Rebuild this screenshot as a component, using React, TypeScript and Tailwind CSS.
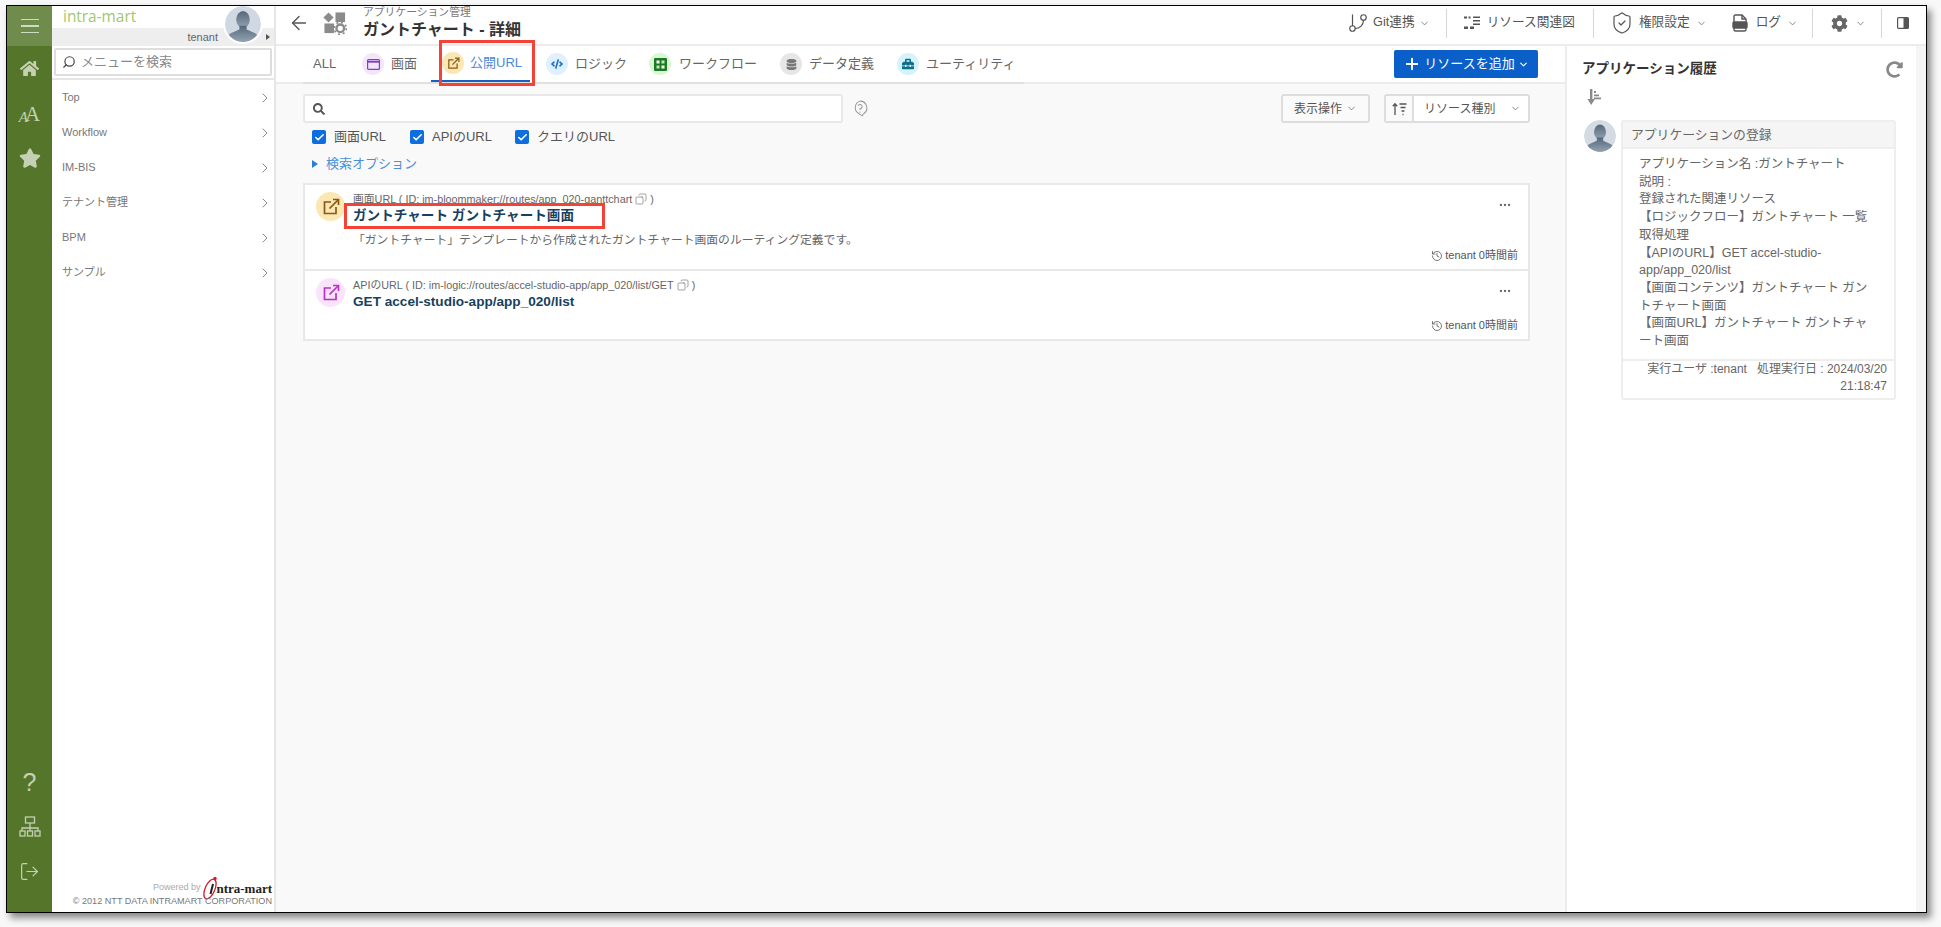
import React from "react";
import { FaHome, FaStar, FaCog, FaRedoAlt, FaSearch, FaDatabase, FaToolbox, FaCode } from "react-icons/fa";
import { ChevronRight, ChevronDown, Search, GitBranch, ShieldCheck, Copy, History, LogOut, Plus, ArrowLeft, Ellipsis, Check } from "lucide-react";

const FONT = "font-['Liberation_Sans','Noto_Sans_CJK_JP',sans-serif]";

function Person({ size, bg }: { size: number; bg: string }) {
  return (
    <svg width={size} height={size} viewBox="0 0 40 40" className="block">
      <defs>
        <clipPath id={`c${size}`}><circle cx="20" cy="20" r="20" /></clipPath>
        <linearGradient id={`g${size}`} x1="0" y1="0" x2="0" y2="1">
          <stop offset="0" stopColor="#55677a" />
          <stop offset="1" stopColor="#93a3b3" />
        </linearGradient>
      </defs>
      <g clipPath={`url(#c${size})`}>
        <rect width="40" height="40" fill={bg} />
        <ellipse cx="20" cy="15" rx="7.5" ry="9.5" fill={`url(#g${size})`} />
        <path d="M16 22h8v4l9 4c3 1 4 4 4 10H3c0-6 1-9 4-10l9-4z" fill={`url(#g${size})`} />
      </g>
    </svg>
  );
}

function Rail() {
  return (
    <div className="w-[45px] shrink-0 bg-[#55752b] flex flex-col items-center text-[#c4d1b2]">
      <div className="w-full h-[40px] bg-[#6f8c4c] flex flex-col items-center justify-center gap-[5px]">
        <div className="w-[18px] h-[1.5px] bg-[#cfdac0]" />
        <div className="w-[18px] h-[1.5px] bg-[#cfdac0]" />
        <div className="w-[18px] h-[1.5px] bg-[#cfdac0]" />
      </div>
      <FaHome size={19} className="mt-[13px]" />
      <div className="font-['Liberation_Serif',serif] h-[21px] mt-[26px] flex items-end leading-none">
        <span className="text-[15px] italic">A</span>
        <span className="text-[21px] -ml-[3px]">A</span>
      </div>
      <FaStar size={22} className="mt-[22px]" />
      <div className="flex-1" />
      <span className="font-['Liberation_Sans',sans-serif] text-[25px] leading-none">?</span>
      <svg width="22" height="22" viewBox="0 0 22 22" fill="none" stroke="currentColor" strokeWidth="1.3" className="mt-[21px]">
        <rect x="6.5" y="1" width="9" height="6" />
        <path d="M11 7v5M3 15v-3h16v3M11 12v3" />
        <rect x="1" y="15" width="5" height="5" />
        <rect x="8.500" y="15" width="5" height="5" />
        <rect x="16" y="15" width="5" height="5" />
      </svg>
      <LogOut size={21} strokeWidth={1.4} className="mt-[23px] mb-[30px]" />
    </div>
  );
}

function Sidebar() {
  const items = ["Top", "Workflow", "IM-BIS", "テナント管理", "BPM", "サンプル"];
  return (
    <div className="w-[224px] shrink-0 bg-white border-r-2 border-[#e6e6e6] flex flex-col">
      <div className="relative h-[40px] shrink-0">
        <div className="h-[22px] pl-[11px] text-[#a3c76d] text-[15.400px] leading-[21px] font-['Open_Sans',sans-serif]">intra-mart</div>
        <div className="h-[18px] bg-[#eeeeee] flex items-center justify-end pr-[56px] text-[11px] text-[#666]">tenant</div>
        <div className="absolute left-[171px] top-[-2px] w-[40px] h-[40px] rounded-full border-2 border-white overflow-hidden">
          <Person size={36} bg="#cfd8e3" />
        </div>
        <div className="absolute right-[4px] top-[28px] w-0 h-0 border-y-[3px] border-y-transparent border-l-[4px] border-l-[#555]" />
      </div>
      <div className="h-[34px] shrink-0 border-b-2 border-[#e6e6e6] px-[2px] pt-[2px]">
        <div className="h-[28px] border-2 border-[#dddddd] rounded-[2px] flex items-center pl-[6px] gap-[5px] text-[13px] text-[#888]">
          <Search size={14} strokeWidth={2} className="-scale-x-100 text-[#444]" />
          <span>メニューを検索</span>
        </div>
      </div>
      <div>
        {items.map((t) => (
          <div key={t} className="h-[35px] flex items-center justify-between pl-[10px] pr-[1px] text-[11px] text-[#777]">
            <span>{t}</span>
            <ChevronRight size={16} strokeWidth={1.3} className="text-[#777]" />
          </div>
        ))}
      </div>
      <div className="flex-1" />
      <div className="pr-[2px] pb-[5px] flex flex-col items-end">
        <div className="flex items-center h-[12px]">
          <span className="text-[9px] text-[#aaa] mr-[2px]">Powered by</span>
          <svg width="18" height="26" viewBox="0 0 18 26" fill="none" className="-my-[7px]">
            <ellipse cx="8" cy="14" rx="4.800" ry="10.500" stroke="#d8192a" strokeWidth="1.300" transform="rotate(24 8 14)" />
            <circle cx="13" cy="3.500" r="1.700" fill="#d8192a" />
            <path d="M11 9 8.500 19" stroke="#222" strokeWidth="2" />
          </svg>
          <span className="font-['Liberation_Serif',serif] font-bold text-[13px] leading-none text-[#222] -ml-[4px]">ntra-mart</span>
        </div>
        <div className="text-[9.100px] leading-[12px] text-[#777] whitespace-nowrap mt-[1px]">© 2012 NTT DATA INTRAMART CORPORATION</div>
      </div>
    </div>
  );
}

function Chev({ className = "" }: { className?: string }) {
  return <ChevronDown size={11} strokeWidth={1.5} className={"text-[#555] " + className} />;
}

function Divider() {
  return <div className="w-[1px] h-[29px] bg-[#d6d6d6]" />;
}

function TopBar() {
  return (
    <div className="h-[40px] shrink-0 bg-white border-b-2 border-[#ececec] flex items-center pb-[4px]">
      <ArrowLeft size={22} strokeWidth={1.5} className="ml-[12px] text-[#555]" />
      <svg width="24" height="24" viewBox="0 0 25 25" className="ml-[13px] text-[#8b8b8b]" fill="currentColor">
        <rect x="2" y="3" width="7.500" height="7.500" transform="rotate(45 5.750 6.750)" />
        <rect x="13" y="1.500" width="10" height="10" />
        <rect x="1.500" y="13" width="10" height="10" />
        <circle cx="18" cy="18" r="4" fill="none" stroke="currentColor" strokeWidth="2.500" />
        <circle cx="18" cy="18" r="6.300" fill="none" stroke="currentColor" strokeWidth="1.800" strokeDasharray="2 2.950" />
      </svg>
      <div className="ml-[16px] flex flex-col -mt-[3px]">
        <span className="text-[10.800px] leading-[16px] text-[#777] whitespace-nowrap">アプリケーション管理</span>
        <span className="text-[16px] leading-[20px] font-bold text-[#333] whitespace-nowrap">ガントチャート - 詳細</span>
      </div>
      <div className="ml-auto flex items-center text-[12.700px] text-[#555] h-full">
        <GitBranch size={22} strokeWidth={1.3} className="text-[#555]" />
        <span className="ml-[4px]">Git連携</span>
        <Chev className="ml-[4px]" />
        <div className="ml-[16px]"><Divider /></div>
        <svg width="16" height="14" viewBox="0 0 16 14" className="ml-[17px] text-[#555]" fill="currentColor">
          <rect x="0" y="0.500" width="3" height="2" />
          <rect x="4.500" y="0.500" width="2" height="2" />
          <rect x="9" y="0.500" width="7" height="1.500" />
          <rect x="9" y="4" width="7" height="1.500" />
          <rect x="9" y="7.500" width="7" height="1.500" />
          <rect x="0" y="10.500" width="4" height="2.500" />
          <rect x="6" y="10.500" width="4" height="2.500" />
        </svg>
        <span className="ml-[7px]">リソース関連図</span>
        <div className="ml-[18px]"><Divider /></div>
        <ShieldCheck size={24} strokeWidth={1.2} className="ml-[16px] text-[#555]" />
        <span className="ml-[5px]">権限設定</span>
        <Chev className="ml-[6px]" />
        <div className="w-[25px]" />
        <svg width="16" height="18" viewBox="0 0 16 18" fill="none" stroke="#555" strokeWidth="1.400">
          <path d="M2 8V2.500A1.500 1.500 0 0 1 3.500 1H10l4 4v3" />
          <path d="M10 1v4h4" />
          <rect x="1" y="8" width="14" height="6" rx="1" fill="#555" />
          <path d="M2 14v1.500A1.500 1.500 0 0 0 3.500 17h9a1.500 1.500 0 0 0 1.500-1.500V14" />
        </svg>
        <span className="ml-[8px]">ログ</span>
        <Chev className="ml-[6px]" />
        <div className="ml-[14px]"><Divider /></div>
        <FaCog size={17} className="ml-[18px] text-[#666]" />
        <Chev className="ml-[7px]" />
        <div className="ml-[15px]"><Divider /></div>
        <svg width="12" height="12" viewBox="0 0 12 12" className="ml-[15px] mr-[17px]">
          <rect x="0.600" y="0.600" width="10.800" height="10.800" rx="1" fill="#fff" stroke="#555" strokeWidth="1.200" />
          <rect x="6.500" y="1" width="5" height="10" fill="#555" />
        </svg>
      </div>
    </div>
  );
}

function TabIcon({ bg, children }: { bg: string; children: React.ReactNode }) {
  return <div className={"w-[22px] h-[22px] rounded-full flex items-center justify-center " + bg}>{children}</div>;
}

function ExtIcon({ color, size = 18 }: { color: string; size?: number }) {
  return (
    <svg width={size} height={size} viewBox="0 0 18 18" fill="none" stroke={color} strokeWidth="1.700">
      <path d="M9 4H2.500v11.500H14V9" />
      <path d="M7.500 10.500 16 2" />
      <path d="M11 1.500h5.500V7" fill="none" />
    </svg>
  );
}

function Tabs() {
  return (
    <div className="h-[38px] shrink-0 bg-white border-b-2 border-[#ececec] flex items-stretch pl-[27px] pr-[27px] justify-between">
      <div className="flex items-stretch text-[13px] text-[#666] -mb-[2px] border-b-2 border-[#e0e0e0] pr-[9px]">
        <div className="flex items-center w-[59px] pl-[10px]">ALL</div>
        <div className="flex items-center gap-[7px] w-[69px]">
          <TabIcon bg="bg-[#f3e6fb]">
            <svg width="13" height="11" viewBox="0 0 13 11" fill="none" stroke="#7f3fc1" strokeWidth="1.200"><rect x="0.600" y="0.600" width="11.800" height="9.800" rx="1" /><path d="M0.600 2.800h11.800" strokeWidth="1.800" /></svg>
          </TabIcon>
          <span>画面</span>
        </div>
        <div className="relative flex items-center gap-[6px] w-[99px] pl-[11px] border-b-2 border-[#1a5fc0] text-[#4a8ad4]">
          <TabIcon bg="bg-[#fbe7b4]"><ExtIcon color="#8a5a14" size={13} /></TabIcon>
          <span>公開URL</span>
          <div className="absolute left-[8px] top-[-6px] w-[96px] h-[46px] border-[3px] border-[#f44336]" />
        </div>
        <div className="flex items-center gap-[7px] pl-[16px] w-[117px]">
          <TabIcon bg="bg-[#e0f0ff]"><FaCode size={12} className="text-[#1a73c8]" /></TabIcon>
          <span>ロジック</span>
        </div>
        <div className="flex items-center gap-[8px] pl-[2px] w-[133px]">
          <TabIcon bg="bg-[#d9f7d3]">
            <svg width="13" height="13" viewBox="0 0 13 13"><rect width="13" height="13" rx="1" fill="#1d7a24" /><rect x="2.500" y="2.500" width="3" height="3" fill="#fff" /><rect x="7.500" y="2.500" width="3" height="3" fill="#bfe8bd" /><rect x="2.500" y="7.500" width="3" height="3" fill="#bfe8bd" /><rect x="7.500" y="7.500" width="3" height="3" fill="#fff" /></svg>
          </TabIcon>
          <span>ワークフロー</span>
        </div>
        <div className="flex items-center gap-[7px] w-[117px]">
          <TabIcon bg="bg-[#e6e6e6]"><FaDatabase size={11} className="text-[#777]" /></TabIcon>
          <span>データ定義</span>
        </div>
        <div className="flex items-center gap-[7px]">
          <TabIcon bg="bg-[#d4f3fb]"><FaToolbox size={12} className="text-[#0e6f8c]" /></TabIcon>
          <span>ユーティリティ</span>
        </div>
      </div>
      <div className="flex items-center h-[28px] mt-[4px] w-[144px] rounded-[2px] bg-[#0a5fc9] text-white text-[13px] justify-center gap-[3px]">
        <Plus size={18} strokeWidth={2.5} />
        <span>リソースを追加</span>
        <ChevronDown size={11} strokeWidth={2.5} />
      </div>
    </div>
  );
}

function Filters() {
  const checks: [string, string][] = [["画面URL", "w-[98px]"], ["APIのURL", "w-[105px]"], ["クエリのURL", ""]];
  return (
    <>
      <div className="flex items-center">
        <div className="w-[540px] h-[29px] bg-white border-2 border-[#e8e8e8] rounded-[3px] flex items-center pl-[8px]">
          <FaSearch size={12} className="text-[#555]" />
        </div>
        <svg width="16" height="17" viewBox="0 0 14 15" fill="none" stroke="#999" strokeWidth="0.900" className="ml-[9px]">
          <path d="M7 1a6 6 0 0 1 3 11.200L9 14l-3-2A6 6 0 0 1 7 1z" />
          <path d="M5.200 5.200A1.900 1.900 0 1 1 7 7.800V9M7 10.300v1" />
        </svg>
        <div className="ml-auto w-[89px] h-[29px] border-2 border-[#dddddd] rounded-[3px] flex items-center justify-center gap-[4px] text-[12px] text-[#555] bg-[#fafafa]">
          <span>表示操作</span><Chev />
        </div>
        <div className="ml-[14px] w-[146px] h-[29px] border-2 border-[#dddddd] rounded-[3px] flex items-center text-[12px] text-[#555] bg-white">
          <div className="w-[28px] h-full border-r-2 border-[#dddddd] flex items-center justify-center bg-[#fafafa]">
            <svg width="15" height="14" viewBox="0 0 15 14" fill="none" stroke="#555" strokeWidth="1.300">
              <path d="M3 13V2M.8 4.200 3 1.800l2.200 2.400" />
              <path d="M7.500 2h7M8.500 5.500h5M9.500 9h3M10.500 12.500h1" />
            </svg>
          </div>
          <span className="ml-[10px]">リソース種別</span>
          <Chev className="ml-auto mr-[7px]" />
        </div>
      </div>
      <div className="flex items-center mt-[6px] pl-[9px] h-[16px]">
        {checks.map(([t, w]) => (
          <div key={t} className={"flex items-center gap-[8px] text-[13px] text-[#555] " + w}>
            <span className="w-[14px] h-[14px] rounded-[2px] bg-[#0d6ee0] flex items-center justify-center"><Check size={11} strokeWidth={3.5} className="text-white" /></span>
            <span>{t}</span>
          </div>
        ))}
      </div>
      <div className="flex items-center mt-[11px] pl-[9px] h-[16px] text-[13px] text-[#4a90d9]">
        <span className="w-0 h-0 border-y-[4px] border-y-transparent border-l-[6px] border-l-[#2a7fd0] mr-[8px]" />
        <span>検索オプション</span>
      </div>
    </>
  );
}

function Row({ color, bg, label, title, desc, red, h }: { color: string; bg: string; label: string; title: string; desc?: string; red?: boolean; h: string }) {
  return (
    <div className={"relative flex pl-[11px] pr-[12px] pt-[7px] " + h}>
      <div className={"w-[29px] h-[29px] rounded-full shrink-0 flex items-center justify-center " + bg}>
        <ExtIcon color={color} size={18} />
      </div>
      <div className="ml-[8px] flex-1 min-w-0">
        <div className="flex items-center text-[10.800px] leading-[14px] text-[#666]">
          <span>{label}</span>
          <Copy size={12} strokeWidth={1.2} className="mx-[3px] -scale-x-100" />
          <span>)</span>
        </div>
        <div className="relative text-[13.600px] leading-[19px] font-bold text-[#173f60] w-fit">
          {title}
          {red && <div className="absolute left-[-9px] top-[-3.500px] w-[261px] h-[26px] border-[3px] border-[#f44336]" />}
        </div>
        {desc && <div className="text-[11.800px] leading-[16px] text-[#666] mt-[7px] whitespace-nowrap">{desc}</div>}
      </div>
      <Ellipsis size={14} strokeWidth={2} className="text-[#666] absolute right-[16px] top-[13px]" />
      <div className="absolute right-[10px] bottom-[7px] flex items-center gap-[2px] text-[11px] leading-[13px] text-[#555]">
        <History size={12} strokeWidth={1.6} />
        <span>tenant 0時間前</span>
      </div>
    </div>
  );
}

function Center() {
  return (
    <div className="flex-1 min-w-0 bg-[#f9f9f9] flex flex-col">
      <Tabs />
      <div className="pl-[27px] pr-[35px] pt-[10px]">
        <Filters />
        <div className="mt-[11px] w-full border-2 border-[#e8e8e8] bg-white">
          <Row color="#8a5a14" bg="bg-[#fbe7b4]" h="h-[86px] border-b-2 border-[#e8e8e8]" red label="画面URL ( ID: im-bloommaker://routes/app_020-ganttchart" title="ガントチャート ガントチャート画面" desc="「ガントチャート」テンプレートから作成されたガントチャート画面のルーティング定義です。" />
          <Row color="#b833c4" bg="bg-[#fbe4fb]" h="h-[68px]" label="APIのURL ( ID: im-logic://routes/accel-studio-app/app_020/list/GET" title="GET accel-studio-app/app_020/list" />
        </div>
      </div>
    </div>
  );
}

function RightPanel() {
  return (
    <div className="w-[361px] shrink-0 flex">
      <div className="w-[351px] bg-white border-l-2 border-[#ececec] px-[15px] pt-[13px]">
        <div className="flex items-center justify-between">
          <span className="text-[13.500px] leading-[20px] font-bold text-[#333]">アプリケーション履歴</span>
          <FaRedoAlt size={17} className="text-[#888] -mr-[2px]" />
        </div>
        <svg width="18" height="18" viewBox="0 0 18 18" fill="#8a8a8a" className="mt-[9px] ml-[5px]">
          <path d="M3 1h2.400v10H8l-3.800 6L.5 11H3z" />
          <rect x="7" y="3" width="2" height="2" />
          <rect x="7" y="6.500" width="5" height="1.800" />
          <rect x="7" y="9.500" width="7" height="1.800" />
        </svg>
        <div className="flex mt-[14px]">
          <div className="w-[32px] h-[32px] rounded-full overflow-hidden ml-[2px] shrink-0"><Person size={32} bg="#d5dbe2" /></div>
          <div className="ml-[5px] w-[275px] border-2 border-[#eeeeee] rounded-[3px] text-[#666]">
            <div className="h-[27px] bg-[#f5f5f5] border-b-2 border-[#eeeeee] flex items-center pl-[8px] text-[12.800px]">アプリケーションの登録</div>
            <div className="pl-[16px] pr-[20px] pt-[7px] pb-[8px] text-[12.500px] leading-[17.700px] break-all">
              <div>アプリケーション名 :ガントチャート</div>
              <div>説明 :</div>
              <div>登録された関連リソース</div>
              <div>【ロジックフロー】ガントチャート 一覧取得処理</div>
              <div className="break-normal">【APIのURL】GET accel-studio-app/app_020/list</div>
              <div>【画面コンテンツ】ガントチャート ガントチャート画面</div>
              <div>【画面URL】ガントチャート ガントチャート画面</div>
            </div>
            <div className="border-t-2 border-[#eeeeee] text-right pr-[7px] pl-[8px] pb-[3px] text-[12px] leading-[17px]">
              実行ユーザ :tenant&nbsp;&nbsp;&nbsp;処理実行日 : 2024/03/20 21:18:47
            </div>
          </div>
        </div>
      </div>
      <div className="flex-1 bg-[#f5f5f5]" />
    </div>
  );
}

export default function App() {
  return (
    <div className={"w-[1941px] h-[927px] bg-[#f8f8f8] pl-[6px] pt-[5px] overflow-hidden " + FONT}>
      <div className="w-[1921px] h-[908px] border border-black shadow-[4px_5px_7px_rgba(0,0,0,0.45)] flex bg-white overflow-hidden">
        <Rail />
        <Sidebar />
        <div className="flex-1 min-w-0 flex flex-col">
          <TopBar />
          <div className="flex-1 min-h-0 flex">
            <Center />
            <RightPanel />
          </div>
        </div>
      </div>
    </div>
  );
}
